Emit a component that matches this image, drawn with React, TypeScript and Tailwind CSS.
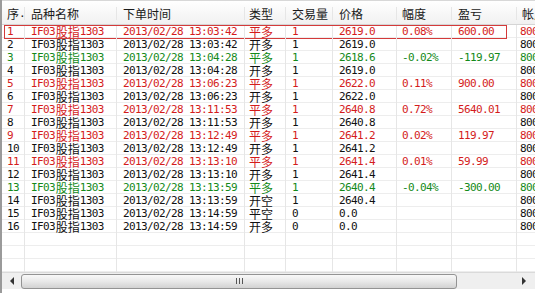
import React from 'react';

type Tone = 'red' | 'green' | 'black';

type Row = {
  no: number;
  time: string;
  kind: string;
  qty: string;
  price: string;
  pct: string;
  pnl: string;
  tone: Tone;
};

const ROWS: Row[] = [
  { no: 1, time: '13:03:42', kind: '平多', qty: '1', price: '2619.0', pct: '0.08%', pnl: '600.00', tone: 'red' },
  { no: 2, time: '13:03:42', kind: '开多', qty: '1', price: '2619.0', pct: '', pnl: '', tone: 'black' },
  { no: 3, time: '13:04:28', kind: '平多', qty: '1', price: '2618.6', pct: '-0.02%', pnl: '-119.97', tone: 'green' },
  { no: 4, time: '13:04:28', kind: '开多', qty: '1', price: '2619.0', pct: '', pnl: '', tone: 'black' },
  { no: 5, time: '13:06:23', kind: '平多', qty: '1', price: '2622.0', pct: '0.11%', pnl: '900.00', tone: 'red' },
  { no: 6, time: '13:06:23', kind: '开多', qty: '1', price: '2622.0', pct: '', pnl: '', tone: 'black' },
  { no: 7, time: '13:11:53', kind: '平多', qty: '1', price: '2640.8', pct: '0.72%', pnl: '5640.01', tone: 'red' },
  { no: 8, time: '13:11:53', kind: '开多', qty: '1', price: '2640.8', pct: '', pnl: '', tone: 'black' },
  { no: 9, time: '13:12:49', kind: '平多', qty: '1', price: '2641.2', pct: '0.02%', pnl: '119.97', tone: 'red' },
  { no: 10, time: '13:12:49', kind: '开多', qty: '1', price: '2641.2', pct: '', pnl: '', tone: 'black' },
  { no: 11, time: '13:13:10', kind: '平多', qty: '1', price: '2641.4', pct: '0.01%', pnl: '59.99', tone: 'red' },
  { no: 12, time: '13:13:10', kind: '开多', qty: '1', price: '2641.4', pct: '', pnl: '', tone: 'black' },
  { no: 13, time: '13:13:59', kind: '平多', qty: '1', price: '2640.4', pct: '-0.04%', pnl: '-300.00', tone: 'green' },
  { no: 14, time: '13:13:59', kind: '开空', qty: '1', price: '2640.4', pct: '', pnl: '', tone: 'black' },
  { no: 15, time: '13:14:59', kind: '平空', qty: '0', price: '0.0', pct: '', pnl: '', tone: 'black' },
  { no: 16, time: '13:14:59', kind: '开多', qty: '0', price: '0.0', pct: '', pnl: '', tone: 'black' },
];

const TONE: Record<Tone, string> = {
  red: 'text-[#d41c1c]',
  green: 'text-[#148a1a]',
  black: 'text-[#111]',
};

// ascii in a half-width mono, chinese in the CJK face (stand-in for SimSun)
function T({ s }: { s: string }) {
  const parts = s.split(/([\x00-\x7f]+)/).filter(Boolean);
  return (
    <>
      {parts.map((p, i) =>
        /^[\x00-\x7f]+$/.test(p) ? (
          <span key={i} className="inline-block align-top h-[13px] leading-[13px] pr-[0.62px] font-['DejaVu_Sans_Mono',monospace] text-[11px] tracking-[-0.62px]">{p}</span>
        ) : (
          <span key={i} className="inline-block align-top h-[13px] leading-[13px] font-['Noto_Sans_CJK_SC',sans-serif] text-[12px]">{p}</span>
        )
      )}
    </>
  );
}

const cell = 'shrink-0 h-[13px] leading-[13px] overflow-x-clip whitespace-nowrap border-r border-[#e6e6e6]';

function Cells({ vals, head }: { vals: string[]; head?: boolean }) {
  return (
    <>
      <div className={`${cell} w-[23px] pl-[5px]`}><T s={vals[0]} /></div>
      <div className={`${cell} w-[92px] pl-[6px]`}><T s={vals[1]} /></div>
      <div className={`${cell} w-[128px] pl-[6px]`}><T s={vals[2]} /></div>
      <div className={`${cell} w-[41px] pl-[4px]`}><T s={vals[3]} /></div>
      <div className={`${cell} w-[47px] pl-[6px]`}><T s={vals[4]} /></div>
      <div className={`${cell} w-[64px] pl-[6px]`}><T s={vals[5]} /></div>
      <div className={`${cell} w-[55px] pl-[5px]`}><T s={vals[6]} /></div>
      <div className={`${cell} w-[65px] pl-[6px]`}><T s={vals[7]} /></div>
      <div className={`${cell} w-[40px] ${head ? 'pl-[5px]' : 'pl-[3px]'}`}><T s={vals[8]} /></div>
    </>
  );
}

function ScrollBar() {
  return (
    <div className="shrink-0 flex items-center h-[17px] bg-[#efefef] border-t border-[#dadada]">
      <div className="w-[19px] h-full flex items-center justify-center">
        <div className="w-0 h-0 border-y-[4px] border-y-transparent border-r-[4px] border-r-[#333]" />
      </div>
      <div className="shrink-0 w-[436px] h-[15px] rounded-[3px] border border-[#939393] bg-linear-to-b from-[#f8f8f8] via-[#e8e8e8] to-[#d2d2d2] flex items-center justify-center gap-[2px]">
        <div className="w-px h-[6px] bg-[#555]" />
        <div className="w-px h-[6px] bg-[#555]" />
        <div className="w-px h-[6px] bg-[#555]" />
      </div>
      <div className="flex-1" />
      <div className="w-[22px] h-full flex items-center justify-center">
        <div className="w-0 h-0 border-y-[4px] border-y-transparent border-l-[4px] border-l-[#333]" />
      </div>
    </div>
  );
}

export default function App() {
  const header = ['序.', '品种名称', '下单时间', '类型', '交易量', '价格', '幅度', '盈亏', '帐户'];
  return (
    <div className="w-[535px] h-[293px] overflow-hidden bg-white border-l-2 border-[#9a9a9a] text-[12px] leading-[13px] font-['Noto_Sans_CJK_SC',sans-serif] flex flex-col">
      <div className="shrink-0 flex items-center h-[25px] pt-[1px] border-t border-[#d8d8d8] border-b border-b-[#d5d5d5] bg-linear-to-b from-white to-[#f1f1f1] text-[#1a1a1a]">
        <div className="flex h-[17px] items-center w-full">
          <Cells vals={header} head />
        </div>
      </div>

      <div className="shrink-0 flex flex-col">
        {ROWS.map((r) => (
          <div key={r.no} className={`relative shrink-0 flex h-[13px] border-b border-[#ededed] ${TONE[r.tone]}`}>
            <Cells
              vals={[String(r.no), 'IF03股指1303', `2013/02/28 ${r.time}`, r.kind, r.qty, r.price, r.pct, r.pnl, '80000']}
            />
            {r.no === 1 && (
              <div className="absolute left-[2px] top-0 w-[503px] h-[14px] border border-[#d43a3a] pointer-events-none" />
            )}
          </div>
        ))}
        {[0, 1, 2].map((i) => (
          <div key={i} className="shrink-0 flex h-[13px] border-b border-[#ededed]">
            <Cells vals={['', '', '', '', '', '', '', '', '']} />
          </div>
        ))}
      </div>

      <ScrollBar />
      <div className="flex-1 bg-white" />
    </div>
  );
}
